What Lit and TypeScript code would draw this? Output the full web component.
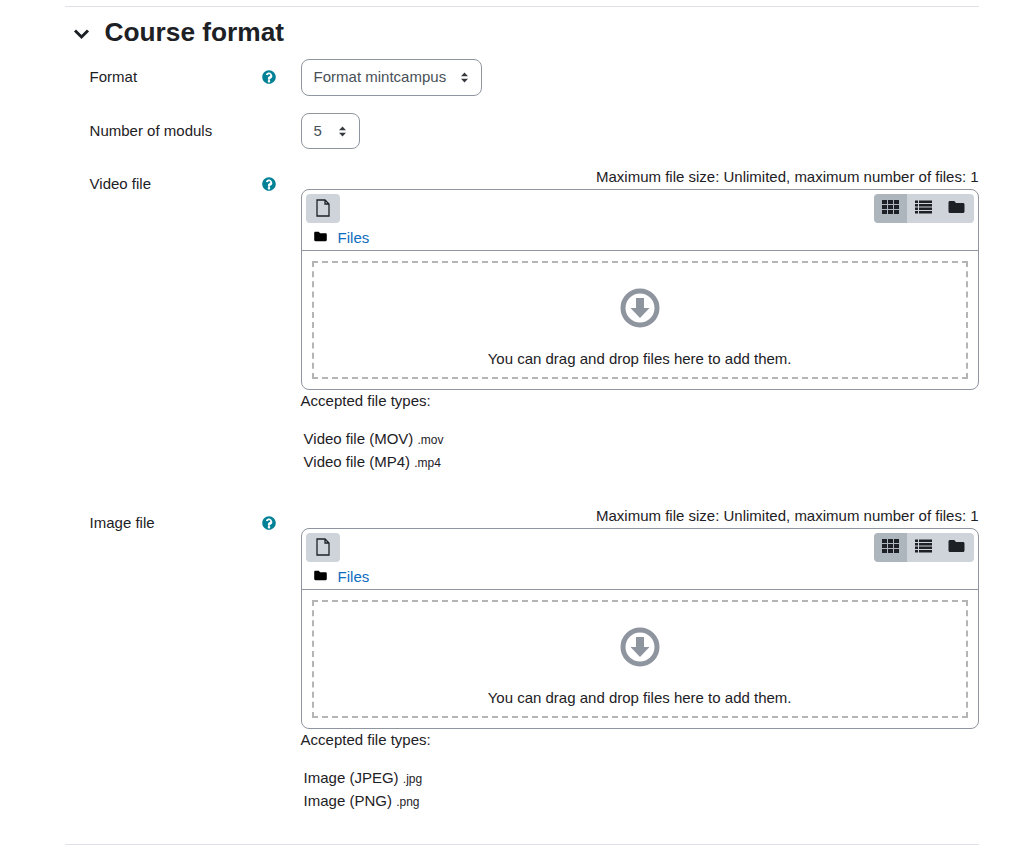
import { LitElement, html, css, svg } from 'lit'
import { customElement } from 'lit/decorators.js'

const helpIcon = html`<svg class="help" viewBox="0 0 512 512"><path fill="#008196" d="M504 256c0 137-111 248-248 248S8 393 8 256 119 8 256 8s248 111 248 248zM262.700 90c-54.500 0-89.300 23-116.500 63.800-3.500 5.300-2.400 12.400 2.700 16.300l34.700 26.300c5.200 3.900 12.600 3 16.700-2.100 17.900-22.700 30.100-35.800 57.300-35.800 20.400 0 45.700 13.100 45.700 33 0 15-12.400 22.700-32.600 34-23.600 13.200-54.800 29.700-54.800 70.900V340c0 6.600 5.400 12 12 12h56c6.600 0 12-5.400 12-12v-4.700c0-28.600 83.500-29.800 83.500-107.100C378.300 170 317.900 90 262.700 90zM256 366c-25.500 0-46.200 20.700-46.200 46.200 0 25.500 20.700 46.200 46.200 46.200s46.200-20.700 46.200-46.200c0-25.500-20.700-46.200-46.200-46.200z"/></svg>`

const updown = html`<svg class="updown" viewBox="0 0 10 14"><path fill="#343a40" d="M5 0.500 9.500 5.500H0.500ZM5 13.500 0.500 8.500H9.500Z"/></svg>`

const folder = (cls: string, color: string) => html`<svg class=${cls} viewBox="0 0 16 14"><path fill=${color} d="M1.500 1h4.300l1.700 2h7c.8 0 1.500.7 1.500 1.500v7c0 .8-.7 1.500-1.500 1.500h-13C.7 13 0 12.300 0 11.500v-9C0 1.700.7 1 1.500 1z"/></svg>`

function gridCells () {
  const cells = []
  for (const y of [0, 5, 10]) {
    for (const x of [0, 6, 12]) {
      cells.push(svg`<rect x=${x} y=${y} width="5" height="4" />`)
    }
  }
  return cells
}

function listRows () {
  const rows = []
  for (const y of [0.5, 4, 7.500, 11]) {
    rows.push(svg`<rect x="0" y=${y} width="3" height="2.500" /><rect x="4" y=${y} width="13" height="2.500" />`)
  }
  return rows
}

@customElement('file-manager')
export class FileManager extends LitElement {
  static styles = css`
    :host {
      display: block;
    }

    .limits {
      text-align: right;
      line-height: 14px;
      height: 19px;
    }

    .box {
      border: 1px solid #8f959e;
      border-radius: 8px;
      height: 199px;
      display: flex;
      flex-direction: column;
    }

    .toolbar {
      display: flex;
      justify-content: space-between;
      padding: 4px 4px 0;
    }

    .btn {
      width: 33.330px;
      height: 29px;
      background: #ced4da;
      display: flex;
      align-items: center;
      justify-content: center;
    }

    .add {
      width: 34px;
      border-radius: 4px;
    }

    .views {
      display: flex;
    }

    .views .btn:first-child {
      background: #adb5bd;
      border-radius: 4px 0 0 4px;
    }

    .views .btn:last-child {
      border-radius: 0 4px 4px 0;
    }

    .add svg {
      width: 16px;
      height: 18px;
      margin-top: -2px;
    }

    .views svg {
      width: 17px;
      height: 14px;
      margin-top: -3px;
      fill: #1d2125;
    }

    .path {
      display: flex;
      align-items: center;
      height: 27px;
      padding-left: 12px;
      border-bottom: 1px solid #8f959e;
    }

    .path .small-folder {
      width: 13px;
      height: 11px;
    }

    .path a {
      color: #0f6cbf;
      margin-left: 11px;
      margin-top: 1px;
    }

    .drop {
      margin: 10px;
      flex: 1;
      border: 2px dashed #b5b5b5;
      display: flex;
      flex-direction: column;
      align-items: center;
    }

    .drop svg {
      width: 40px;
      height: 40px;
      margin-top: 25px;
    }

    .drop p {
      margin: 20px 0 0;
      line-height: 22px;
    }

    .accepted {
      line-height: 22px;
    }

    .types {
      list-style: none;
      margin: 15px 0 0;
      padding: 0 0 0 3px;
    }

    .types li {
      line-height: 23px;
      height: 23px;
    }

    .types small {
      font-size: 12px;
      line-height: 1;
    }
  `

  static properties = {
    types: { type: Array }
  }

  declare types: { name: string, ext: string }[]

  constructor () {
    super()
    this.types = []
  }

  render () {
    return html`
      <div class="limits">Maximum file size: Unlimited, maximum number of files: 1</div>
      <div class="box">
        <div class="toolbar">
          <div class="btn add">
            <svg viewBox="0 0 16 18"><path fill="none" stroke="#1d2125" stroke-width="1.300" d="M2 1h8l4 4v12H2zM10 1v4h4"/></svg>
          </div>
          <div class="views">
            <div class="btn"><svg viewBox="0 0 17 14">${gridCells()}</svg></div>
            <div class="btn"><svg viewBox="0 0 17 14">${listRows()}</svg></div>
            <div class="btn">${folder('', '#1d2125')}</div>
          </div>
        </div>
        <div class="path">
          ${folder('small-folder', '#000')}
          <a>Files</a>
        </div>
        <div class="drop">
          <svg viewBox="0 0 40 40">
            <circle cx="20" cy="20" r="17" fill="none" stroke="#8f959e" stroke-width="5" />
            <path fill="#8f959e" d="M16 10h8v10h5.500L20 30l-9.500-10H16z" />
          </svg>
          <p>You can drag and drop files here to add them.</p>
        </div>
      </div>
      <div class="accepted">Accepted file types:</div>
      <ul class="types">
        ${this.types.map((t) => html`<li>${t.name} <small>${t.ext}</small></li>`)}
      </ul>
    `
  }
}

@customElement('app-root')
export class AppRoot extends LitElement {
  static styles = css`
    :host {
      display: block;
      font-family: "Liberation Sans", Arial, sans-serif;
      font-size: 15px;
      color: #1d2125;
      background: #fff;
      height: 850px;
      overflow: hidden;
    }

    .section {
      margin: 6px 51.400px 0 64.600px;
      border-top: 1px solid #dee2e6;
      border-bottom: 1px solid #dee2e6;
      height: 839px;
      box-sizing: border-box;
    }

    .heading {
      display: flex;
      align-items: center;
      height: 50px;
      padding-left: 8.400px;
    }

    .heading svg {
      width: 17px;
      height: 12px;
      margin-top: 3px;
    }

    h3 {
      margin: 0 0 0 14.600px;
      font-size: 26.250px;
      font-weight: 700;
      line-height: 50px;
    }

    .row {
      display: grid;
      grid-template-columns: 236px 1fr;
    }

    .label {
      display: flex;
      justify-content: space-between;
      padding-left: 25px;
      line-height: 22px;
    }

    .help {
      width: 14px;
      height: 14px;
      margin: 5px 25px 0 0;
    }

    select {
      appearance: none;
      font: inherit;
      color: #495057;
      background: #fff;
      border: 1px solid #8f959e;
      border-radius: 8px;
      height: 37px;
      padding: 0 34px 2px 12px;
      margin: 0;
      display: block;
    }

    .select-wrap {
      position: relative;
      display: inline-block;
    }

    .updown {
      position: absolute;
      right: 13px;
      top: 13px;
      width: 9px;
      height: 11px;
      pointer-events: none;
    }

    .format {
      margin-top: 2px;
      height: 54px;
    }

    .format .label {
      padding-top: 7px;
    }

    .format .help {
      margin-top: 4px;
    }

    .modules {
      height: 57px;
    }

    .modules .label {
      padding-top: 7px;
    }

    .modules select {
      width: 59px;
      height: 36px;
    }

    .video {
      height: 339px;
    }

    .video .label,
    .image .label {
      padding-top: 3px;
    }

    .video .help,
    .image .help {
      margin-top: 4px;
    }
  `

  render () {
    return html`
      <div class="section">
        <div class="heading">
          <svg viewBox="0 0 17 12"><path fill="none" stroke="#1d2125" stroke-width="3" d="M2 2.500 8.500 9 15 2.500"/></svg>
          <h3>Course format</h3>
        </div>
        <div class="row format">
          <div class="label"><span>Format</span>${helpIcon}</div>
          <div>
            <div class="select-wrap">
              <select><option>Format mintcampus</option></select>
              ${updown}
            </div>
          </div>
        </div>
        <div class="row modules">
          <div class="label"><span>Number of moduls</span></div>
          <div>
            <div class="select-wrap">
              <select><option>5</option></select>
              ${updown}
            </div>
          </div>
        </div>
        <div class="row video">
          <div class="label"><span>Video file</span>${helpIcon}</div>
          <file-manager .types=${[{ name: 'Video file (MOV)', ext: '.mov' }, { name: 'Video file (MP4)', ext: '.mp4' }]}></file-manager>
        </div>
        <div class="row image">
          <div class="label"><span>Image file</span>${helpIcon}</div>
          <file-manager .types=${[{ name: 'Image (JPEG)', ext: '.jpg' }, { name: 'Image (PNG)', ext: '.png' }]}></file-manager>
        </div>
      </div>
    `
  }
}
